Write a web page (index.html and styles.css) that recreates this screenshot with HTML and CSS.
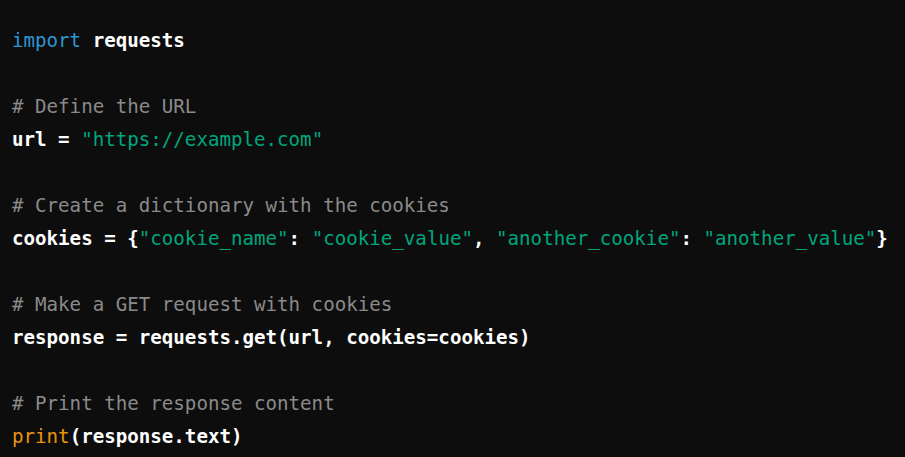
FILE: index.html
```html
<!DOCTYPE html>
<html>
<head>
<meta charset="utf-8">
<link rel="stylesheet" href="styles.css">
</head>
<body>
<pre class="code"><code><span class="kw">import</span> requests

<span class="cm"># Define the URL</span>
url = <span class="str">"https://example.com"</span>

<span class="cm"># Create a dictionary with the cookies</span>
cookies = {<span class="str">"cookie_name"</span>: <span class="str">"cookie_value"</span>, <span class="str">"another_cookie"</span>: <span class="str">"another_value"</span>}

<span class="cm"># Make a GET request with cookies</span>
response = requests.get(url, cookies=cookies)

<span class="cm"># Print the response content</span>
<span class="bi">print</span>(response.text)</code></pre>
</body>
</html>
```
FILE: styles.css
```css
html, body {
  margin: 0;
  padding: 0;
  background: #0d0d0d;
  height: 100%;
  overflow: hidden;
}
.code {
  margin: 0;
  padding: 24px 12px 0 12px;
  font-family: "DejaVu Sans Mono", "Liberation Mono", monospace;
  font-size: 19.15px;
  line-height: 33px;
  color: #ffffff;
  font-weight: bold;
  white-space: pre;
}
.kw { color: #2e95d3; font-weight: normal; }
.str { color: #00a67d; font-weight: normal; }
.cm { color: #8a8a8a; font-weight: normal; }
.bi { color: #e9950c; font-weight: normal; }
```
